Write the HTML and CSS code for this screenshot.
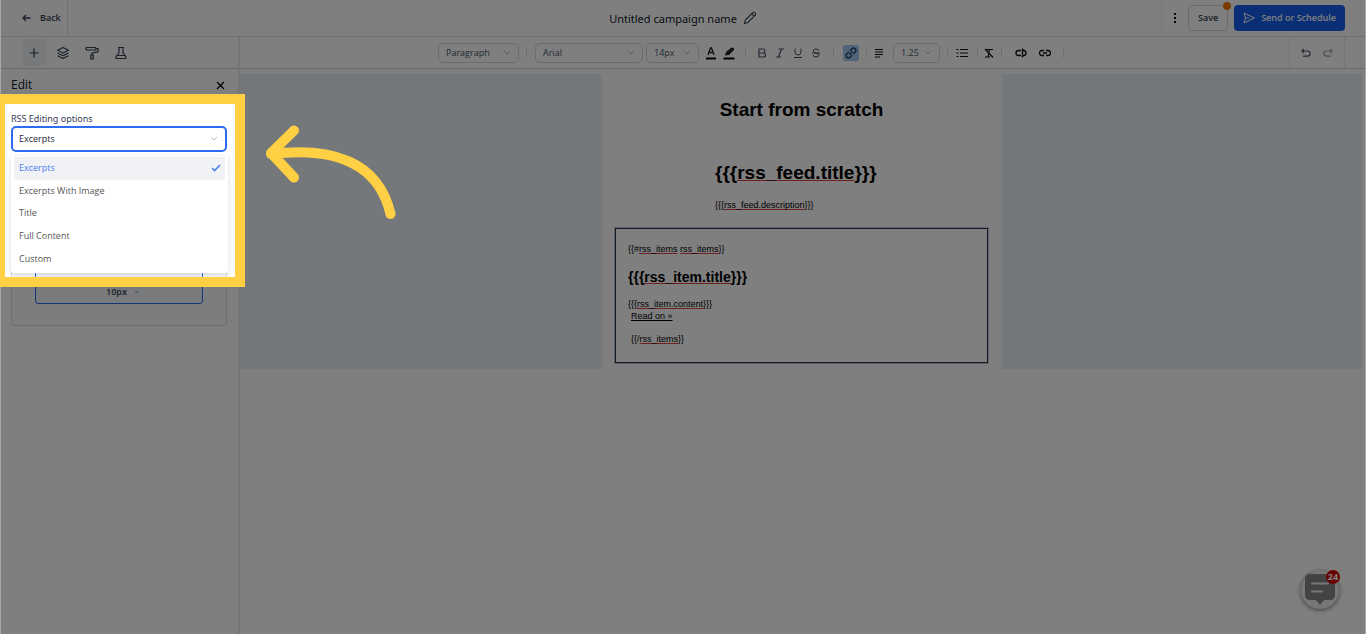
FILE: index.html
```html
<!DOCTYPE html>
<html lang="en">
<head>
<meta charset="utf-8">
<title>Campaign editor</title>
<link rel="stylesheet" href="styles.css">
</head>
<body>
<div class="app">
  <header class="topbar">
    <div class="topbar-left">
      <button class="back" type="button">
        <svg width="9" height="8" viewBox="0 0 9 8"><path d="M8.500 4H1M4 1 1 4l3 3" fill="none" stroke="currentColor" stroke-width="1.300"/></svg>
        Back
      </button>
    </div>
    <div class="campaign">
      <h1 class="campaign-name">Untitled campaign name</h1>
      <button class="plain" type="button" aria-label="Rename">
        <svg width="14" height="14" viewBox="0 0 14 14"><path d="M1.500 12.500 2.300 9 10 1.500Q11 .8 12 1.700T12.400 4L4.800 11.500ZM8.700 2.800l2.500 2.400" fill="none" stroke="currentColor" stroke-width="1.100"/></svg>
      </button>
    </div>
    <div class="topbar-right">
      <button class="more" type="button" aria-label="More">
        <svg width="4" height="12" viewBox="0 0 4 12"><path d="M1 1h2v2H1zM1 5h2v2H1zM1 9h2v2H1z"/></svg>
      </button>
      <button class="save" type="button">Save<span class="unsaved"></span></button>
      <button class="send" type="button">
        <svg width="12" height="12" viewBox="0 0 12 12"><path d="M1 1l10.500 5L1 11l1.500-5ZM2.500 6H6" fill="none" stroke="currentColor" stroke-linejoin="round"/></svg>
        Send or Schedule
      </button>
    </div>
  </header>

  <div class="workspace">
    <aside class="sidebar">
      <nav class="tabs">
        <button class="tab active" type="button" aria-label="Add"><svg width="14" height="14" viewBox="0 0 14 14"><path d="M7 2.500v9M2.500 7h9" fill="none" stroke="currentColor" stroke-width="1.200"/></svg></button>
        <button class="tab" type="button" aria-label="Layers"><svg width="14" height="14" viewBox="0 0 14 14"><path d="M7 1.500 12.500 4.300 7 7 1.500 4.300ZM1.500 7 7 9.800 12.500 7M1.500 9.700 7 12.500l5.500-2.800" fill="none" stroke="currentColor" stroke-width="1.100" stroke-linejoin="round"/></svg></button>
        <button class="tab" type="button" aria-label="Styles"><svg width="14" height="14" viewBox="0 0 14 14"><path d="M2 1.500h8q1 0 1 1.200T10 4H2Q1 4 1 2.700T2 1.500ZM11 2.700h2v3L7 7.200V9M5.800 9h2.400v3.800H5.800Z" fill="none" stroke="currentColor" stroke-width="1.200"/></svg></button>
        <button class="tab" type="button" aria-label="Test"><svg width="14" height="14" viewBox="0 0 14 14"><path d="M4 1.500h6M5 1.500v5L2 11q-.5 1.500 1 1.500h8q1.500 0 1-1.500L9 6.500v-5M3.500 9.500h7" fill="none" stroke="currentColor" stroke-width="1.200"/></svg></button>
      </nav>
      <div class="panel">
        <div class="panel-head">
          <h2>Edit</h2>
          <button class="plain" type="button" aria-label="Close"><svg width="9" height="9" viewBox="0 0 9 9"><path d="m1 1 7 7M8 1 1 8" fill="none" stroke="#000" stroke-width="1.300"/></svg></button>
        </div>
        <div class="field">
          <label for="rss">RSS Editing options</label>
          <span class="select rss">
            <select id="rss"><option>Excerpts</option></select>
            <svg width="8" height="6" viewBox="0 0 8 6"><path d="m1 1 3 3 3-3" fill="none" stroke="currentColor"/></svg>
          </span>
          <ul class="options" role="listbox" aria-label="RSS Editing options">
            <li class="chosen" role="option" aria-selected="true">Excerpts<svg width="10" height="8" viewBox="0 0 10 8"><path d="m1 4 2.600 2.600L9 1" fill="none" stroke="currentColor" stroke-width="1.600"/></svg></li>
            <li role="option">Excerpts With Image</li>
            <li role="option">Title</li>
            <li role="option">Full Content</li>
            <li role="option">Custom</li>
          </ul>
        </div>
        <div class="spacing">
          <div class="spacing-inner">
            <button class="spacing-value" type="button">10px<svg width="6" height="4" viewBox="0 0 6 4"><path d="m1 1 2 2 2-2" fill="none" stroke="#98a2b3"/></svg></button>
          </div>
        </div>
      </div>
    </aside>

    <main class="editor">
      <div class="toolbar">
        <div class="tools">
          <div class="group"><span class="select w80"><select aria-label="Block"><option>Paragraph</option></select><svg width="8" height="6" viewBox="0 0 8 6"><path d="m1 1 3 3 3-3" fill="none" stroke="currentColor"/></svg></span></div>
          <div class="group fonts">
            <span class="select w108"><select aria-label="Font"><option>Arial</option></select><svg width="8" height="6" viewBox="0 0 8 6"><path d="m1 1 3 3 3-3" fill="none" stroke="currentColor"/></svg></span>
            <span class="select w53"><select aria-label="Size"><option>14px</option></select><svg width="8" height="6" viewBox="0 0 8 6"><path d="m1 1 3 3 3-3" fill="none" stroke="currentColor"/></svg></span>
            <div class="colors">
              <button class="tool" type="button" aria-label="Text colour"><svg width="12" height="14" viewBox="0 0 12 14"><path d="M3 9 5.500 2h1L9 9M4 6.500h4" fill="none" stroke="#222" stroke-width="1.300"/><path d="M1 11.500h10v2H1z"/></svg></button>
              <button class="tool" type="button" aria-label="Highlight"><svg width="12" height="14" viewBox="0 0 12 14"><path d="M2 9.500 3 6l5.500-4.500L11 2v2L6 9Z" fill="#222"/><path d="M.500 11.500h11v2H.500z"/></svg></button>
            </div>
          </div>
          <div class="group marks">
            <button class="tool" type="button" aria-label="Bold"><svg width="10" height="10" viewBox="0 0 10 10"><path d="M2 1h4a1.900 1.900 0 0 1 0 4H2h4.500a2 2 0 0 1 0 4H2Z" fill="none" stroke="currentColor" stroke-width="1.200"/></svg></button>
            <button class="tool" type="button" aria-label="Italic"><svg width="10" height="10" viewBox="0 0 10 10"><path d="M3.500 1H9M1 9h5M6.500 1l-3 8" fill="none" stroke="currentColor" stroke-width="1.200"/></svg></button>
            <button class="tool" type="button" aria-label="Underline"><svg width="10" height="10" viewBox="0 0 10 10"><path d="M2 .500v3.500a3 3 0 0 0 6 0V.500M1 9.500h8" fill="none" stroke="currentColor"/></svg></button>
            <button class="tool" type="button" aria-label="Strikethrough"><svg width="10" height="10" viewBox="0 0 10 10"><path d="M8 3Q7.500 1 5 1T2.200 3Q2.300 4.500 5 5t3 2Q7.800 9 5 9T2 7M1 5h8" fill="none" stroke="currentColor"/></svg></button>
          </div>
          <div class="group link-group">
            <button class="tool on" type="button" aria-label="Link"><svg width="12" height="12" viewBox="0 0 12 12"><path d="M4.500 7.500 7.500 4.500M5 3.800 7 1.800a2.200 2.200 0 0 1 3.200 3.200L8.200 7M7 8.200l-2 2A2.200 2.200 0 0 1 1.800 7l2-2" fill="none" stroke="currentColor" stroke-width="1.300"/></svg></button>
          </div>
          <div class="group align-group">
            <button class="tool" type="button" aria-label="Align"><svg width="10" height="10" viewBox="0 0 10 10"><path d="M1 1.500h8M1 4h8M1 6.500h8M1 9h5" stroke="#111" stroke-width="1.200"/></svg></button>
            <span class="select w47"><select aria-label="Line height"><option>1.25</option></select><svg width="8" height="6" viewBox="0 0 8 6"><path d="m1 1 3 3 3-3" fill="none" stroke="currentColor"/></svg></span>
          </div>
          <div class="group list-group">
            <button class="tool" type="button" aria-label="List"><svg width="12" height="10" viewBox="0 0 12 10"><path d="M.500 1.500h2M.500 5h2M.500 8.500h2M4 1.500h8M4 5h8M4 8.500h8" stroke="#111" stroke-width="1.200"/></svg></button>
          </div>
          <div class="group clear-group">
            <button class="tool" type="button" aria-label="Clear format"><svg width="10" height="10" viewBox="0 0 10 10"><path d="M1.500 1.500H9M5.500 1.500 4 9M1 9h5M1 1l8 8.500" fill="none" stroke="#111" stroke-width="1.200"/></svg></button>
          </div>
          <div class="group insert-group">
            <button class="tool" type="button" aria-label="Merge tag"><svg width="12" height="10" viewBox="0 0 12 10"><path d="M6 2.500H3.500a2.500 2.500 0 0 0 0 5H6M7.500 .500v9M7.500 2Q11 2.500 11 5T7.500 8" fill="none" stroke="#111" stroke-width="1.300"/></svg></button>
            <button class="tool" type="button" aria-label="Special link"><svg width="12" height="10" viewBox="0 0 12 10"><path d="M5 2.500H3a2.400 2.400 0 0 0 0 5h2M7 2.500h2a2.400 2.400 0 0 1 0 5H7M4 5h4" fill="none" stroke="#111" stroke-width="1.300"/></svg></button>
          </div>
        </div>
        <div class="history">
          <button class="tool" type="button" aria-label="Undo"><svg width="10" height="10" viewBox="0 0 10 10"><path d="M3 .800.900 3 3 5.200M1 3h5.500a2.600 2.600 0 0 1 0 5.200H2" fill="none" stroke="currentColor" stroke-width="1.200"/></svg></button>
          <button class="tool" type="button" aria-label="Redo" disabled><svg width="10" height="10" viewBox="0 0 10 10"><path d="M7 .800 9.100 3 7 5.200M9 3H3.500a2.600 2.600 0 0 0 0 5.200H8" fill="none" stroke="currentColor" stroke-width="1.200"/></svg></button>
        </div>
      </div>

      <div class="canvas">
        <article class="email">
          <h2 class="email-heading">Start from scratch</h2>
          <div class="feed">
            <h2>{{{<u class="spell">rss_feed.title</u>}}}</h2>
            <p>{{{<u class="spell">rss_feed.description</u>}}}</p>
          </div>
          <section class="items">
            <p>{{#<u class="spell">rss_items</u> <u class="spell">rss_items</u>}}</p>
            <h3><a href="#item">{{{<u class="spell">rss_item.title</u>}}}</a></h3>
            <p>{{{<u class="spell">rss_item.content</u>}}}</p>
            <p class="indent"><a href="#read">Read on »</a></p>
            <p class="indent last">{{/<u class="spell">rss_items</u>}}</p>
          </section>
        </article>
      </div>
    </main>
  </div>

  <button class="chat" type="button" aria-label="Messages">
    <svg width="32" height="32" viewBox="0 0 32 32"><path d="M6 0h20q5 0 5 5v16q0 5-5 5h-6l-4 5-4-5H6q-5 0-5-5V5q0-5 5-5Z" fill="#868686"/><path d="M8 9.500h16M8 17.500h10" stroke="#eee" stroke-width="2" stroke-linecap="round"/></svg>
    <span class="unread">24</span>
  </button>

  <div class="tour">
    <div class="shade"></div>
    <div class="edges"></div>
    <div class="frame"></div>
    <svg class="arrow" width="132" height="96" viewBox="0 0 132 96"><path d="M29 7.500 6 30 29 54.500M6 31C65 24 113 37 125.500 91" fill="none" stroke="#ffd043" stroke-width="10" stroke-linecap="round" stroke-linejoin="round"/></svg>
  </div>
</div>
</body>
</html>
```

FILE: styles.css
```css
* { box-sizing: border-box; }
body { margin: 0; background: #fff; color: #1d2433; font: 9px/12px "Open Sans", "Noto Sans", sans-serif; }
h1, h2, h3, p, ul { margin: 0; padding: 0; }
button, select { font: inherit; color: inherit; margin: 0; padding: 0; border: 0; background: none; }
svg { display: block; flex: none; }

.app { position: relative; display: flex; flex-direction: column; min-height: 100vh; overflow: hidden; }

/* Top bar */
.topbar { display: grid; grid-template-columns: 1fr auto 1fr; height: 37px; border-bottom: 1px solid #dcdfe4; }
.topbar-left { display: flex; }
.back { display: flex; align-items: center; gap: 9px; padding: 0 6px 0 22px; border-right: 1px solid #e2e4e8; font-weight: 600; color: #344054; }
.campaign { display: flex; align-items: center; gap: 6px; color: #344054; }
.campaign-name { padding-top: 1px; font-family: "Noto Sans", sans-serif; font-size: 11px; line-height: 16px; font-weight: 400; color: #101828; }
.plain { display: flex; }
.topbar-right { display: flex; align-items: center; justify-content: flex-end; gap: 6px; padding-right: 21px; }
.more { display: flex; align-items: center; align-self: stretch; padding: 0 5px 0 11px; border-left: 1px solid #ebedf0; }
.save { position: relative; width: 40px; height: 26px; border: 1px solid #d0d5dd; border-radius: 4px; font-weight: 600; color: #344054; }
.unsaved { position: absolute; top: -4px; right: -4px; width: 8px; height: 8px; border-radius: 50%; background: #f07800; }
.send { display: flex; align-items: center; gap: 6px; height: 26px; padding: 0 9px; border-radius: 4px; background: #155eef; color: #fff; font-weight: 600; }

.workspace { display: flex; flex: 1; }

/* Sidebar */
.sidebar { width: 240px; flex: none; border-right: 2px solid #e8eaed; }
.tabs { display: flex; align-items: center; gap: 5px; height: 32px; padding-left: 22px; border-bottom: 1px solid #cdd1d7; color: #344054; }
.tab { display: grid; place-items: center; width: 24px; height: 27px; border-radius: 2px; }
.tab.active { background: #f0f3f7; }
.panel { padding: 8px 11px; }
.panel-head { display: flex; align-items: center; justify-content: space-between; padding-right: 2px; }
.panel-head h2 { font-size: 12px; line-height: 16px; font-weight: 400; color: #101828; }
.field { position: relative; margin-top: 19px; }
.field label { display: block; font-family: "Noto Sans", sans-serif; line-height: 14px; color: #344054; }
.select { position: relative; display: flex; align-items: center; height: 20px; border: 1px solid #d5d8de; border-radius: 5px; color: #475467; }
.select select { width: 100%; height: 100%; padding: 0 7px; appearance: none; outline: none; }
.select svg { position: absolute; right: 7px; color: #b4bac4; }
.rss { width: 216px; height: 26px; border: 2px solid #2d6cf0; color: #1d2433; }
.rss select { padding-left: 6px; }
.options { position: absolute; z-index: 1; top: 44px; left: 0; display: grid; grid-auto-rows: 1fr; width: 217px; height: 117px; padding: 1px 3px 3px; list-style: none; background: #fff; border-radius: 3px; box-shadow: 0 2px 6px #10182826; color: #555; }
.options li { display: flex; align-items: center; justify-content: space-between; padding: 0 4px 0 5px; border-radius: 2px; }
.options .chosen { background: #f1f2f5; color: #4a80f0; }
.spacing { width: 216px; height: 160px; margin-top: 14px; padding: 20px 23px 21px; border: 1px solid #dadde2; border-radius: 3px; background: #f8fafc; }
.spacing-inner { display: flex; align-items: flex-end; justify-content: center; height: 100%; padding: 0 0 5px 8px; border: 1px solid #2d6cf0; border-radius: 3px; background: #f2f5f8; }
.spacing-value { display: flex; align-items: center; gap: 7px; color: #344054; font-weight: 600; }

/* Editor toolbar */
.editor { flex: 1; min-width: 0; }
.toolbar { display: flex; height: 32px; padding-right: 21px; border-bottom: 1px solid #cdd1d7; }
.tools { display: flex; flex: 1; align-items: center; justify-content: center; padding-right: 27px; }
.group { display: flex; align-items: center; justify-content: center; height: 20px; padding-right: 8px; position: relative; }
.group::after { content: ""; align-self: center; position: absolute; right: 0; width: 1px; height: 11px; background: #dfe2e6; }
.fonts { gap: 3px; padding-left: 8px; }
.colors { display: flex; }
.marks { width: 88px; padding: 0 3px 0 0; }
.link-group { width: 33px; padding: 0; }
.align-group { gap: 5px; padding-left: 3px; }
.list-group { width: 30px; padding: 0 3px 0 0; }
.clear-group { width: 24px; padding: 0 3px 0 0; }
.insert-group { width: 62px; gap: 6px; padding: 0; }
.w80 { width: 81px; }
.w108 { width: 108px; }
.w53 { width: 53px; }
.w47 { width: 47px; }
.tool { display: grid; place-items: center; width: 18px; height: 16px; color: #475467; }
.tool.on { width: 16px; background: #a3cbf5; border-radius: 2px; color: #24364f; }
.history { display: flex; align-items: center; justify-content: center; gap: 4px; width: 56px; border: solid #e6e8eb; border-width: 0 1px; }
.tool:disabled { color: #98a2b3; }

/* Email canvas */
.canvas { margin: 5px 4px 0 0; padding-left: 2px; background: #e8f0f6; }
.email { width: 400px; margin: 0 auto; padding: 24px 14px 6px 13px; background: #fff; color: #000; font-family: "Liberation Sans", Arial, sans-serif; }
.email h2 { font-size: 19px; line-height: 24px; }
.email-heading { text-align: center; }
.feed { margin: 39px 0 17px 100px; }
.feed p { margin-top: 14px; }
.items { height: 135px; padding: 14px 12px; border: 1px solid #24364a; outline: 1px solid #64758a66; }
.items h3 { margin: 13px 0 12px; font-size: 14px; line-height: 18px; }
.items a { color: inherit; }
.indent { padding-left: 3px; }
.last { margin-top: 11px; }
.spell { text-decoration: underline solid #e04040 1px; text-decoration-skip-ink: none; }

/* Chat launcher */
.chat { position: absolute; right: 27px; bottom: 25px; display: grid; place-items: center; width: 38px; height: 38px; border-radius: 50%; background: #eee; box-shadow: 0 1px 5px #0008; }
.unread { position: absolute; top: -1px; right: -1px; min-width: 14px; height: 14px; border-radius: 50%; background: #d60000; color: #fff; font-weight: 700; line-height: 14px; text-align: center; }

/* Guided tour overlay */
.tour { position: absolute; z-index: 5; inset: 0; overflow: hidden; pointer-events: none; }
.shade { position: absolute; top: 104px; left: 5px; width: 230px; height: 173px; box-shadow: 0 0 0 9999px #00000080; }
.edges { position: absolute; inset: 0; border: solid #a8a8a8; border-width: 0 1px; }
.frame { position: absolute; top: 94px; left: -5px; width: 250px; height: 193px; border: 10px solid #ffd043; }
.arrow { position: absolute; top: 123px; left: 265px; }
```
